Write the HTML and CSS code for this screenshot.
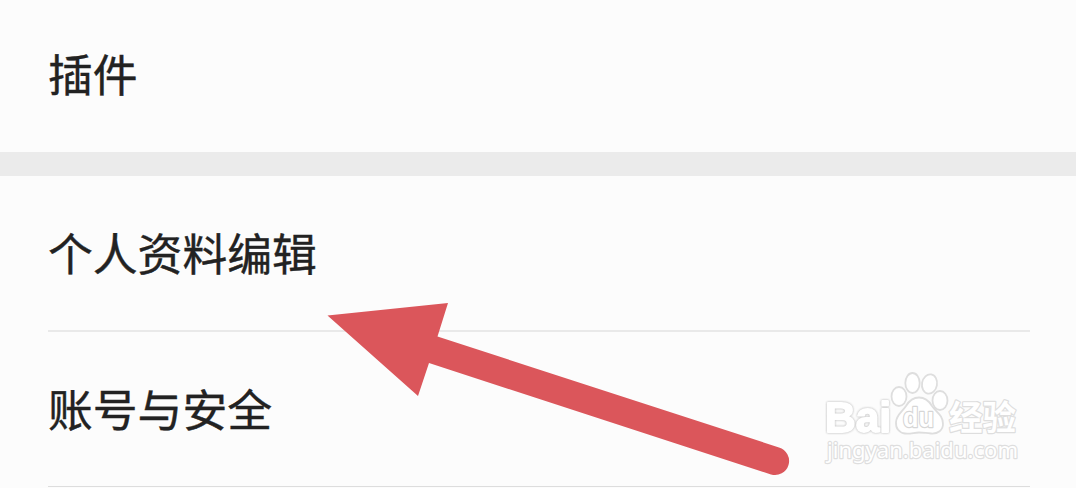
FILE: index.html
```html
<!DOCTYPE html>
<html lang="zh-CN">
<head>
	<meta charset="UTF-8">
	<title>设置</title>
	<link rel="stylesheet" href="styles.css">
</head>
<body>
	<div id="main">
		<ul class="group">
			<li class="item">插件</li>
		</ul>
		<ul class="group">
			<li class="item line">个人资料编辑</li>
			<li class="item line">账号与安全</li>
		</ul>

		<svg class="arrow" width="464" height="176" viewBox="327 301 464 176">
			<path d="M327.500 315.500L448 303L437.500 336.500L779 447.500A14 14 0 0 1 771 474.500L429 363L418 396Z"/>
		</svg>

		<svg class="logo" width="206" height="104" viewBox="818 366 206 104">
			<text class="word" x="825" y="431.500" textLength="66" lengthAdjust="spacingAndGlyphs">Bai</text>
			<g class="paw">
				<ellipse cx="899" cy="396.500" rx="7.500" ry="9.500"/>
				<ellipse cx="912.500" cy="383" rx="7.200" ry="10"/>
				<ellipse cx="929.500" cy="384" rx="7.500" ry="9.700" transform="rotate(10 929.5 384)"/>
				<ellipse cx="940" cy="400.500" rx="7.500" ry="9.500"/>
				<path d="M919 397.500C925 397.500 929 401 932 406C936 412 943 415 943 424C943 430 938 434 931 433.500C925 433 923 432.500 919 432.500C914 432.500 911 434 905 433.500C899 433 895.500 428 896 422C896.500 415 902 412 906 406C909 401 913 397.500 919 397.500Z"/>
			</g>
			<text class="du" x="903" y="427" textLength="31" lengthAdjust="spacingAndGlyphs">du</text>
			<text class="cn" x="949" y="430" textLength="67" lengthAdjust="spacingAndGlyphs">经验</text>
			<text class="url" x="827" y="458" textLength="191" lengthAdjust="spacingAndGlyphs">jingyan.baidu.com</text>
		</svg>
	</div>
</body>
</html>
```

FILE: styles.css
```css
*{
	margin: 0;
	padding: 0;
}
body{
	background: #ebebeb;
	font-family: "Noto Sans CJK SC", sans-serif;
}
#main{
	position: relative;
	height: 488px;
	overflow: hidden;
	display: flex;
	flex-direction: column;
	gap: 24px;
}
.group{
	background: #fcfcfc;
	padding: 0 46px 0 48px;
	list-style: none;
}
.group:last-of-type{
	flex: 1;
}
.item{
	height: 152px;
	line-height: 145px;
	font-size: 44.8px;
	color: #222;
	-webkit-text-stroke: 0.4px #222;
}
.line{
	height: 154px;
	line-height: 151px;
	border-bottom: 2px solid #e9e9e9;
}
.line:last-child{
	border-bottom: 1px solid #ddd;
}
.arrow{
	position: absolute;
	left: 327px;
	top: 301px;
	fill: #db565b;
}
/* watermark */
.logo{
	position: absolute;
	left: 818px;
	top: 366px;
	fill: #fff;
	stroke: #dedede;
	stroke-width: 2.4px;
	stroke-linejoin: round;
}
.logo text{
	paint-order: stroke;
}
.paw{
	stroke-width: 1.8px;
}
.logo .word{
	font: bold 42px "Liberation Sans", sans-serif;
	stroke: #fff;
	stroke-width: 1.8px;
	filter: drop-shadow(0 0 0.8px #c4c4c4) drop-shadow(0 0 0.4px #ddd);
}
.du{
	font: bold 27px "Liberation Sans", sans-serif;
	stroke: #d6d6d6;
}
.cn{
	font: bold 34px "Noto Sans CJK SC", sans-serif;
}
.url{
	font: 22px "Noto Sans", sans-serif;
}
```
